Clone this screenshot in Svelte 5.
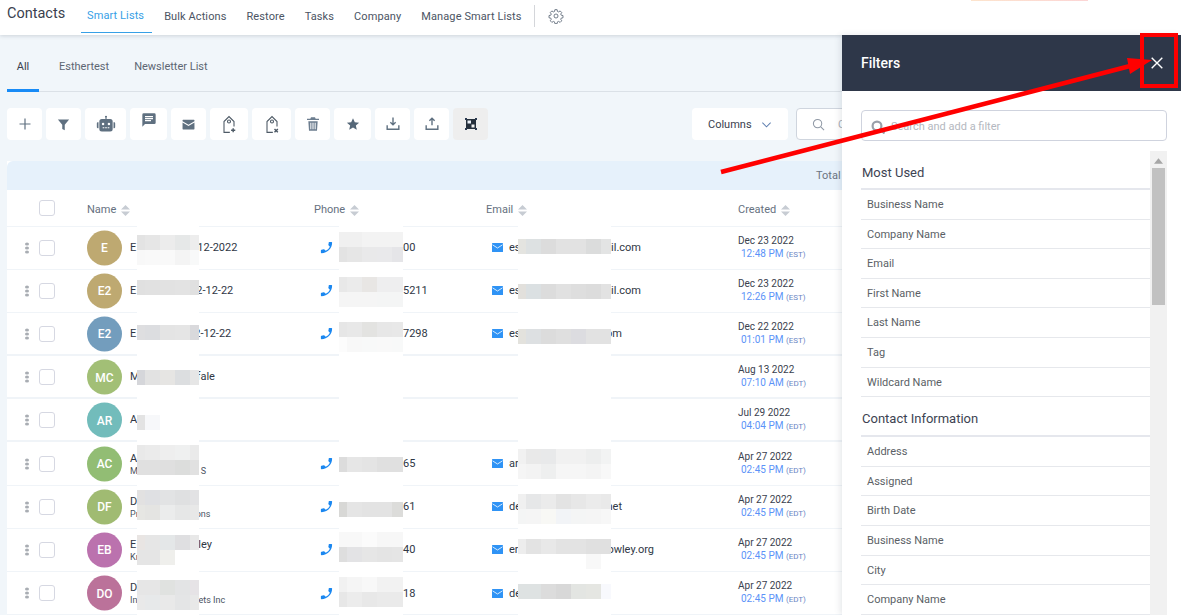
<script>
  const tabs = ['Smart Lists', 'Bulk Actions', 'Restore', 'Tasks', 'Company', 'Manage Smart Lists'];
  const widths = [35, 35, 41, 37, 35, 38, 39, 35, 37, 35, 35, 35];

  const rows = [
    { i: 'E', c: '#bea971', n: ['E', '12-2022'], g: 61, ph: '00', em: ['es', 'il.com', 641], d: 'Dec 23 2022', t: '12:48 PM', z: 'EST' },
    { i: 'E2', c: '#bea971', n: ['E', '2-12-22'], g: 60, ph: '5211', em: ['es', 'il.com', 641], d: 'Dec 23 2022', t: '12:26 PM', z: 'EST' },
    { i: 'E2', c: '#739dbd', n: ['E', '2-12-22'], g: 58, ph: '7298', em: ['es', 'om', 622], d: 'Dec 22 2022', t: '01:01 PM', z: 'EST' },
    { i: 'MC', c: '#a2bf76', n: ['M', 'fale'], g: 57, d: 'Aug 13 2022', t: '07:10 AM', z: 'EDT' },
    { i: 'AR', c: '#72bcbb', n: ['A', ''], d: 'Jul 29 2022', t: '04:04 PM', z: 'EDT' },
    { i: 'AC', c: '#92bd74', n: ['A', ''], s: ['M', 'S'], sg: 63, ph: '65', em: ['ar', ''], d: 'Apr 27 2022', t: '02:45 PM', z: 'EDT' },
    { i: 'DF', c: '#a0bb72', n: ['D', ''], s: ['Pr', 'ons'], sg: 57, ph: '61', em: ['de', 'net', 622], d: 'Apr 27 2022', t: '02:45 PM', z: 'EDT' },
    { i: 'EB', c: '#bb72ae', n: ['E', 'ley'], g: 62, s: ['Kr', ''], ph: '40', em: ['er', 'owley.org', 654], d: 'Apr 27 2022', t: '02:45 PM', z: 'EDT' },
    { i: 'DO', c: '#bb729a', n: ['D', ''], s: ['In', 'ets Inc'], sg: 61, ph: '18', em: ['de', ''], d: 'Apr 27 2022', t: '02:45 PM', z: 'EDT' }
  ];

  const g5 = [8, 15, 15, 15, 9];
  const g5b = [8, 15, 15, 15, 11];
  const g7 = [8, 15, 15, 15, 15, 15, 10];

  const mosaics = [
    { x: 137, w: 62, cols: g5, cells: [
      [235, 'e3e3e3 e6e6e6 ececec e6e8e8 ededed'], [250, 'f8f8f8 f9f9f9 f9f9f9 f4f4f4 f8f9f9'],
      [280, 'e0e0e0 e1e1e1 e2e2e2 e3e3e3 e0e0e0'],
      [325, 'dedee0 dcdde0 e4e4e4 e5e5e5 d9d9dc'],
      [370, 'd5d6da e2e2e2 e6e5e3 dcdee0 e6e6e6'],
      [415, 'e3e3e3 f7f8fa'],
      [445, 'e9e9e9 ebebeb eeeeee eff0f0 eaeaea'], [460, 'e0e0e0 e0e0e0 dfdfdf dcdddc e1e1e1'],
      [490, 'e2e1e1 dfe0e3 e2e3e4 dfe0e1 e2e2e4'], [505, 'e6e6e3 e4e4e2 ebecec e6e7e7 e8e8e8'],
      [535, 'e9e5e3 e6e6e6 e4e7e8 dfdfe1 e8e8e8'], [550, 'e5e5e5 e5e5e5 efefec'],
      [580, 'e6e6e6 e6e6e6 e0e2e0 e3e4e5 e6e3e6'], [595, 'e9e9e9 e7e9ea e9e9e9 e4e5e6 e8e8e8']
    ] },
    { x: 339, w: 64, cols: g5b, cells: [
      [232, 'f0f0f0 f0f0f0 f3f3f3 f3f3f3 f3f3f3'], [247, 'e3e3e3 e6e6e6 e9e9ea e9e9eb e5e5e8'],
      [277, 'e8e8e8 ebebeb e8e6e4 eeeeef eeeeef'], [292, 'f5f5f5 f5f5f5 f5f5f5 f4f5f5 f4f5f5'],
      [322, 'e6e6e6 e8e8e8 e3e3e1 e7e7e7 e8e8e8'], [337, 'fcfcfc f8f8f8 f8f9f9 f9f9f9 f8f9f9'],
      [457, 'dcdcdc e6e6e6 e4e4e4 e0e0e0 e0e0e0'],
      [502, 'd8d8d6 e5e5e5 e3e3e3 e3e3e3 dcdcda'],
      [532, 'f8f8f8 f8f8f8 fbfbfb f7f7f7 f7f7f7'], [547, 'dedede e3e3e5 e6e6e6 e4e4e4 e5e5e5'],
      [577, 'f1f1f1 f5f5f5 f8f8f8 f2f2f2 f2f2f2'], [592, 'e7e7e7 ececec e8e8e8 eaeaea eaeaea']
    ] },
    { x: 518, w: 93, cols: g7, cells: [
      [239, 'e4e4e0 dde1e2 dcdcdc e2e2e2 e2e2e2 dbdcdc e3e4e4'],
      [284, 'e2e0dc dbe0e2 dcdcdc e1e1e1 dedede dcdcdc e2e2e2'],
      [329, 'e3e2dd dde0e2 dcdcdc dfdfdf dcdce0 e2e2e2 e2e2e2'],
      [449, 'f1f1f1 e9e9e9 e8e9ea f1f1f1 f1f1f1 edeeee f2f3f3'], [464, 'f5f5f5 f3f3f3 eeefef f6f6f6 f6f6f6 f4f4f4 f8f8f8'],
      [494, 'f0f0f0 e6e7e8 ebebeb e3e3e3 e7e7e7 ebebeb e9e9e9'], [509, 'f4f5f5 f5f5f5 f8f8f5 f2f4f7 f4f5f5 f5f5f5 f7f7f7'],
      [539, 'ededed e3e3e3 e8e8e8 e3e3e3 e3e3e3 e0e0e0 e0e0e0'], [554, 'ffffff ffffff ffffff ffffff ffffff f8f8f8'],
      [584, 'dee2e2 dee2e2 dcdcdc d8d8d8 e3e5e2 e5e6e2 f8f9fd']
    ] }
  ];

  const filterGroups = [
    { title: 'Most Used', items: ['Business Name', 'Company Name', 'Email', 'First Name', 'Last Name', 'Tag', 'Wildcard Name'] },
    { title: 'Contact Information', items: ['Address', 'Assigned', 'Birth Date', 'Business Name', 'City', 'Company Name'] }
  ];
</script>

{#snippet sort()}
  <svg viewBox="0 0 9 11" width="9" height="11"><path d="M4.500 0L9 4.500H0zM4.500 11L0 6.500h9z" fill="#c7ccd3" /></svg>
{/snippet}

<div class="page">
  <header class="top">
    <span class="brand">Contacts</span>
    <nav class="tabs">
      {#each tabs as t, i}
        <span class="tab" class:on={i === 0}>{t}</span>
      {/each}
    </nav>
    <span class="vr"></span>
    <svg class="gear" viewBox="0 0 24 24" width="16" height="16" fill="none" stroke="#5f6b7a" stroke-width="1.300" stroke-linejoin="round">
      <circle cx="12" cy="12" r="3" />
      <path d="M10.300 2.500h3.400l.5 2.700 1.700.7 2.300-1.500 2.400 2.400-1.500 2.300.7 1.700 2.700.5v3.400l-2.700.5-.7 1.700 1.500 2.300-2.400 2.400-2.300-1.500-1.700.7-.5 2.700h-3.400l-.5-2.700-1.700-.7-2.300 1.500-2.400-2.400 1.500-2.300-.7-1.700-2.700-.5v-3.400l2.700-.5.7-1.700-1.500-2.300 2.400-2.400 2.300 1.500 1.700-.7z" />
    </svg>
    <span class="strip"></span>
  </header>

  <div class="sub">
    <span class="sub-tab on">All</span>
    <span class="sub-tab">Esthertest</span>
    <span class="sub-tab">Newsletter List</span>
  </div>

  <div class="toolbar">
    {#each widths as w, i}
      <button class="tool" class:dim={i === 11} style="width:{w}px">
        {#if i === 0}
          <svg viewBox="0 0 12 12" width="12" height="12"><path d="M6 .5v11M.5 6h11" stroke="#5f7080" stroke-width="1.200" /></svg>
        {:else if i === 1}
          <svg viewBox="0 0 24 24" width="15" height="15"><path d="M3 4h18l-7 8.500V21l-4-2v-6.500z" fill="#5f7080" /></svg>
        {:else if i === 2}
          <svg viewBox="0 0 24 24" width="20" height="20"><path d="M12 2a1.200 1.200 0 0 1 .7 2.200V6H17a3 3 0 0 1 3 3v9a3 3 0 0 1-3 3H7a3 3 0 0 1-3-3V9a3 3 0 0 1 3-3h4.300V4.200A1.200 1.200 0 0 1 12 2zM2 10h1v7H2a1 1 0 0 1-1-1v-5a1 1 0 0 1 1-1zm19 0h1a1 1 0 0 1 1 1v5a1 1 0 0 1-1 1h-1z" fill="#5f7080" /><circle cx="8.500" cy="12" r="1.500" fill="#fff" /><circle cx="15.500" cy="12" r="1.500" fill="#fff" /><path d="M8 16.500h8" stroke="#fff" stroke-width="1.400" stroke-dasharray="2 1" /></svg>
        {:else if i === 3}
          <svg class="up" viewBox="0 0 24 24" width="16" height="16"><path d="M20 2H4a2 2 0 0 0-2 2v18l4-4h14a2 2 0 0 0 2-2V4a2 2 0 0 0-2-2zM6 14v-2h9v2zm0-3V9h12v2zm0-3V6h12v2z" fill="#5f7080" /></svg>
        {:else if i === 4}
          <svg viewBox="0 0 24 24" width="13" height="13"><path d="M2 3h20a1 1 0 0 1 1 1v1.800L12 12.500 1 5.800V4a1 1 0 0 1 1-1zm-1 5.200 11 6.700 11-6.700V20a1 1 0 0 1-1 1H2a1 1 0 0 1-1-1z" fill="#5f7080" /></svg>
        {:else if i === 5 || i === 6}
          <svg viewBox="0 0 24 24" width="20" height="20" fill="none" stroke="#4e5a66" stroke-width="1.300"><path d="M13 22H6V9l6-6 6 6v6" /><circle cx="12" cy="9" r="1.800" />
            {#if i === 5}<path d="M17 17v5M14.500 19.500h5" stroke-width="1.700" />{:else}<path d="M15 18l4 4M19 18l-4 4" stroke-width="1.700" />{/if}
          </svg>
        {:else if i === 7}
          <svg viewBox="0 0 24 24" width="16" height="16"><path d="M9 2h6l1 2h5v2H3V4h5zM5 8h14l-1 14H6zm3 2v10h1.500V10zm3.200 0v10h1.600V10zm3.300 0v10H16V10z" fill="#6c7d8f" /></svg>
        {:else if i === 8}
          <svg viewBox="0 0 24 24" width="14" height="14"><path d="M12 2l3.100 6.900 7.400.8-5.600 5 1.600 7.300-6.500-3.800L5.500 22l1.600-7.300-5.600-5 7.400-.8z" fill="#566879" /></svg>
        {:else if i === 9}
          <svg viewBox="0 0 24 24" width="14" height="14" fill="none" stroke="#5f7080" stroke-width="2.400"><path d="M12 1v12M7.500 9l4.500 4.500L16.500 9M2 14v7h20v-7" /></svg>
        {:else if i === 10}
          <svg viewBox="0 0 24 24" width="14" height="14" fill="none" stroke="#5f7080" stroke-width="2.400"><path d="M12 14V2M7.500 6.500L12 2l4.500 4.500M2 14v7h20v-7" /></svg>
        {:else}
          <svg viewBox="0 0 12 12" width="12" height="12"><rect x="1" y="1" width="10" height="10" fill="#25303c" /><rect x="2.500" y="2.500" width="3.500" height="3" fill="#eef3fb" /><rect x="6.500" y="6.500" width="3" height="3" fill="#f2f2f2" /><rect width="2" height="2" fill="#2b3a50" /><rect x="10" width="2" height="2" fill="#2b3a50" /><rect y="10" width="2" height="2" fill="#2b3a50" /><rect x="10" y="10" width="2" height="2" fill="#2b3a50" /></svg>
        {/if}
      </button>
    {/each}
    <button class="columns">Columns
      <svg viewBox="0 0 12 12" width="11" height="11" fill="none" stroke="#5f7fb0" stroke-width="1.100"><path d="M1.500 4l4.500 4.500L10.500 4" /></svg>
    </button>
    <div class="search">
      <svg viewBox="0 0 14 14" width="13" height="13" fill="none" stroke="#8f98a5" stroke-width="1.100"><circle cx="6" cy="6" r="4.500" /><path d="M9.500 9.500L13 13" /></svg>
      <span>Contacts</span>
    </div>
  </div>

  <section class="table">
    <div class="band"><span>Total</span></div>
    <div class="row head">
      <span class="box"></span>
      <span class="h name-col">Name {@render sort()}</span>
      <span class="h phone-col">Phone {@render sort()}</span>
      <span class="h email-col">Email {@render sort()}</span>
      <span class="h date-col">Created {@render sort()}</span>
    </div>
    {#each rows as r, idx}
      <div class="row" class:thick={idx >= 2 && idx <= 4}>
        <span class="dots"><b></b><b></b><b></b></span>
        <span class="box"></span>
        <span class="avatar" style="background:{r.c}">{r.i}</span>
        <div class="who">
          <div class="nm">{r.n[0]}{#if r.n[1]}<span class="gapn" style="width:{r.g}px"></span>{r.n[1]}{/if}</div>
          {#if r.s}
            <div class="co">{r.s[0]}{#if r.s[1]}<span class="gapc" style="width:{r.sg}px"></span>{r.s[1]}{/if}</div>
          {/if}
        </div>
        <div class="phone">
          {#if r.ph}
            <svg viewBox="0 0 24 24" width="15" height="15"><path transform="translate(24 0) scale(-1 1)" d="M6.620 10.790c1.440 2.830 3.760 5.140 6.590 6.590l2.200-2.200c.27-.27.67-.36 1.020-.24 1.120.37 2.330.57 3.570.57.55 0 1 .45 1 1V20c0 .55-.45 1-1 1-9.390 0-17-7.610-17-17 0-.55.45-1 1-1h3.500c.55 0 1 .45 1 1 0 1.250.2 2.450.57 3.570.11.35.03.74-.25 1.020z" fill="#1a87f0" /></svg>
            <span class="num">{r.ph}</span>
          {/if}
        </div>
        <div class="email">
          {#if r.em}
            <svg viewBox="0 0 11 9" width="11" height="9"><rect width="11" height="9" rx=".6" fill="#2f93f5" /><path d="M.5 1.800L5.500 5l5-3.200" fill="none" stroke="#fff" stroke-width=".8" /></svg>
            <span class="addr">{r.em[0]}</span>
            {#if r.em[1]}<span class="tail" style="right:{682 - r.em[2]}px">{r.em[1]}</span>{/if}
          {/if}
        </div>
        <div class="when">
          <div class="d">{r.d}</div>
          <div class="t">{r.t} <small>({r.z})</small></div>
        </div>
      </div>
    {/each}
  </section>

  {#each mosaics as m}
    <div class="mosaic" style="left:{m.x}px;width:{m.w}px">
      {#each m.cells as [top, list]}
        <div class="strip-row" style="top:{top - 226}px">
          {#each list.split(' ') as c, k}
            <span style="width:{m.cols[k]}px;background:#{c}"></span>
          {/each}
        </div>
      {/each}
    </div>
  {/each}

  <aside class="panel">
    <div class="p-head">
      <span>Filters</span>
      <svg viewBox="0 0 12 12" width="12" height="12"><path d="M.7.7l10.600 10.600M11.300.7L.7 11.300" stroke="#fff" stroke-width="1.400" /></svg>
    </div>
    <div class="p-search">
      <svg viewBox="0 0 14 14" width="14" height="14" fill="none" stroke="#9aa0aa" stroke-width="2.200"><circle cx="6" cy="6" r="4.400" /><path d="M9 9l4.500 4.500" /></svg>
      <span>Search and add a filter</span>
    </div>
    <div class="p-body">
      <div class="p-list">
        {#each filterGroups as g}
          <h3>{g.title}</h3>
          {#each g.items as it}
            <div class="f-item">{it}</div>
          {/each}
        {/each}
      </div>
      <div class="bar">
        <svg viewBox="0 0 10 6" width="9" height="6"><path d="M5 0l5 6H0z" fill="#a6a6a6" /></svg>
        <div class="thumb"></div>
      </div>
    </div>
  </aside>

  <svg class="annot" viewBox="0 0 1181 615" width="1181" height="615">
    <path d="M721 172L1134 65" stroke="#f00" stroke-width="4.500" />
    <path d="M1152 60L1127 58L1130 74z" fill="#f00" />
    <rect x="1142" y="35" width="34" height="51" fill="none" stroke="#f00" stroke-width="4" />
  </svg>
</div>

<style>
  :global(body) { margin: 0; background: #f1f6fa; }
  .page {
    position: relative; width: 1181px; height: 615px; overflow: hidden;
    background: #f1f6fa; font-family: Roboto, "Liberation Sans", sans-serif; color: #2f3745;
  }
  .top {
    position: relative; z-index: 2; height: 35px; box-sizing: border-box; padding-left: 7px;
    display: flex; align-items: flex-start; background: #fff; box-shadow: 0 1px 4px rgba(60, 70, 90, .2);
  }
  .brand { font-size: 14.500px; line-height: 28px; color: #3a414e; width: 74px; }
  .tabs { display: flex; height: 33px; }
  .tab { font-size: 11px; line-height: 33px; padding: 0 6px; margin-right: 8px; color: #4b5463; white-space: nowrap; letter-spacing: .1px; }
  .tab.on { color: #37a0e6; border-bottom: 1px solid #37a0e6; height: 32px; line-height: 31px; padding-right: 8px; margin-right: 6px; }
  .vr { width: 1px; height: 22px; margin: 5px 0 0 -2px; background: #d4d6da; }
  .gear { margin: 8px 0 0 13px; }
  .strip { position: absolute; left: 971px; top: 0; width: 117px; height: 1px; background: linear-gradient(90deg, #fde4cd, #fcd5d5); }

  .sub {
    height: 57px; margin-left: 7px; box-sizing: border-box; padding-top: 16px;
    display: flex; border-bottom: 1px solid #dbe1e7;
  }
  .sub-tab { font-size: 11px; line-height: 32px; height: 41px; box-sizing: border-box; color: #5d6673; margin-right: 25px; white-space: nowrap; }
  .sub-tab.on { width: 32px; margin-right: 20px; text-align: center; color: #3a414e; border-bottom: 3px solid #188bf6; }

  .toolbar { display: flex; gap: 4px; margin: 16px 0 21px 7px; height: 32px; }
  .tool {
    height: 32px; padding: 0; border: 0; border-radius: 4px; background: #fff;
    display: flex; align-items: center; justify-content: center;
  }
  .tool.dim { background: #eeeeee; }
  .tool .up { margin-top: -8px; }
  .columns {
    width: 96px; height: 32px; margin-left: 200px; border: 0; border-radius: 4px; background: #fff;
    font: 11px Roboto, sans-serif; color: #3a414e; display: flex; align-items: center; gap: 9px; padding: 0 0 0 16px;
  }
  .search {
    width: 200px; height: 32px; box-sizing: border-box; margin-left: 4px; border: 1px solid #cfd5de; border-radius: 4px;
    background: #fff; display: flex; align-items: center; gap: 13px; padding-left: 15px; font-size: 11px; color: #a8aeb8;
  }

  .table { margin-left: 7px; width: 900px; background: #fff; min-height: 460px; }
  .band {
    height: 29px; background: #e6f1fb; border-radius: 6px 0 0 0; box-sizing: border-box; padding-left: 809px;
    font-size: 11px; line-height: 29px; color: #6b7482;
  }
  .row {
    position: relative; height: 43.200px; box-sizing: border-box; display: flex; align-items: center;
    border-bottom: 1px solid #f0f4f8; font-size: 11px;
  }
  .row.thick { box-shadow: inset 0 -1px 0 #f0f4f8; }
  .row.head { height: 36.500px; }
  .dots { position: absolute; left: 18px; top: 50%; transform: translateY(-50%); display: flex; flex-direction: column; gap: 1px; }
  .dots b { width: 4px; height: 3px; border-radius: 50%; background: #a9adb3; }
  .box { position: absolute; left: 32px; top: 50%; transform: translateY(-50%); width: 16px; height: 16px; box-sizing: border-box; border: 1px solid #d6d8e2; border-radius: 3px; background: #fff; }
  .h { position: absolute; top: 14px; font-size: 11px; line-height: 12px; color: #667180; display: flex; align-items: center; gap: 5px; }
  .name-col { left: 80px; } .phone-col { left: 307px; } .email-col { left: 479px; } .date-col { left: 731px; }
  .avatar {
    position: absolute; left: 80px; top: 50%; transform: translateY(-50%); width: 35px; height: 35px; border-radius: 50%;
    display: flex; align-items: center; justify-content: center; color: #fff; font-size: 12px; font-weight: 500;
  }
  .who { position: absolute; left: 123px; top: 50%; transform: translateY(-50%); white-space: nowrap; color: #2f3745; }
  .nm { font-size: 11px; line-height: 14px; }
  .co { font-size: 9px; line-height: 11px; color: #4a5362; }
  .gapn, .gapc { display: inline-block; }
  .phone { position: absolute; left: 312px; top: 50%; transform: translateY(-50%); width: 120px; height: 16px; display: flex; align-items: center; }
  .num { position: absolute; left: 84px; font-size: 11px; }
  .email { position: absolute; left: 485px; top: 50%; transform: translateY(-50%); width: 190px; height: 16px; display: flex; align-items: center; font-size: 11px; }
  .addr { margin-left: 6px; }
  .tail { position: absolute; }
  .when { position: absolute; left: 731px; top: 50%; transform: translateY(-50%); white-space: nowrap; }
  .d { font-size: 10px; line-height: 13px; color: #3a414e; }
  .t { font-size: 10px; line-height: 14px; padding-left: 3px; color: #5b93f8; }
  .t small { font-size: 8px; color: #6b86c4; }

  .mosaic { position: absolute; top: 226px; bottom: 0; background: #fff; z-index: 1; }
  .strip-row { position: absolute; left: 0; display: flex; height: 15px; }
  .strip-row span { display: block; height: 15px; }

  .panel {
    position: absolute; z-index: 3; left: 842px; top: 35px; width: 339px; height: 580px; background: #fff;
    box-shadow: -2px 0 6px rgba(60, 70, 90, .12); display: flex; flex-direction: column;
  }
  .p-head {
    height: 56px; flex: none; box-sizing: border-box; padding: 0 18px 0 19px; background: #2e3749; color: #fff;
    display: flex; align-items: center; justify-content: space-between; font-size: 14px; font-weight: 500;
  }
  .p-search {
    flex: none; width: 306px; height: 31px; box-sizing: border-box; margin: 19px 0 0 19px; border: 1px solid #cfd3de; border-radius: 4px;
    display: flex; align-items: center; gap: 6px; padding: 2px 0 0 9px; font-size: 11px; color: #b4b8c0;
  }
  .p-body { flex: 1; min-height: 0; display: flex; margin: 10px 0 0 19px; width: 306px; }
  .p-list { width: 289px; flex: none; overflow: hidden; }
  h3 {
    margin: 0; height: 39px; box-sizing: border-box; padding: 13px 0 0 1px; font-size: 13px; line-height: 18px; font-weight: 400;
    color: #3d4352; border-bottom: 2px solid #e5e7ed;
  }
  .f-item { height: 29.600px; box-sizing: border-box; border-bottom: 1px solid #e6e8ec; padding-left: 6px; font-size: 11px; line-height: 30.500px; color: #5b5f66; overflow: hidden; }
  .f-item + h3 { margin-top: 0; height: 40px; padding-top: 13px; }
  .bar { width: 17px; flex: none; background: #f1f1f1; display: flex; flex-direction: column; align-items: center; padding-top: 7px; box-sizing: border-box; }
  .thumb { width: 13px; height: 137px; margin-top: 4px; background: #c1c1c1; }
  .annot { position: absolute; z-index: 4; left: 0; top: 0; pointer-events: none; }
</style>
